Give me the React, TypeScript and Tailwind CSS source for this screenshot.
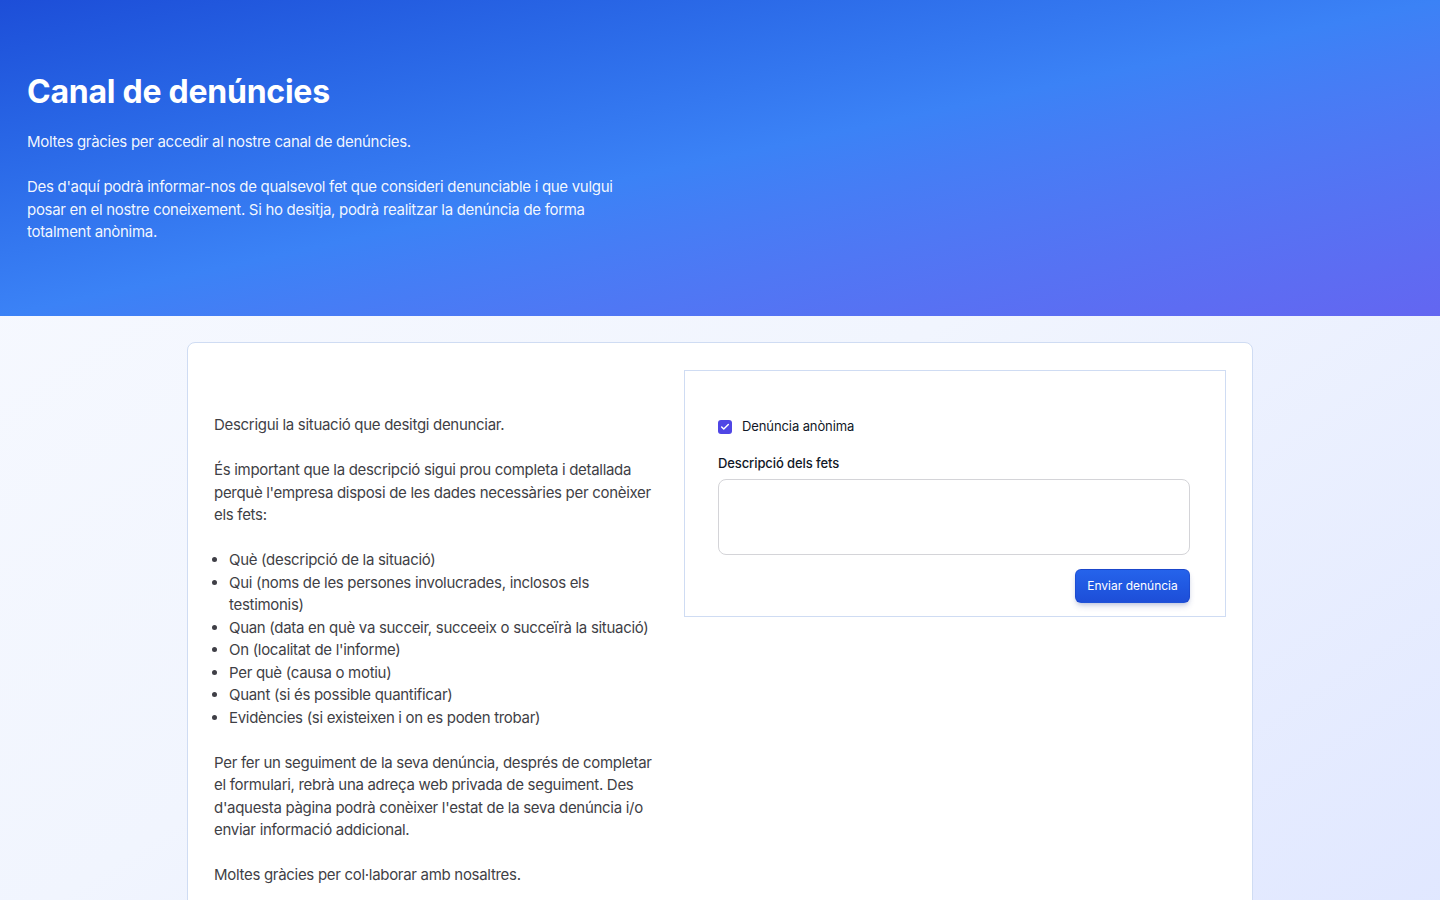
import { Check } from "lucide-react";

const items = [
  "Què (descripció de la situació)",
  "Qui (noms de les persones involucrades, inclosos els testimonis)",
  "Quan (data en què va succeir, succeeix o succeïrà la situació)",
  "On (localitat de l'informe)",
  "Per què (causa o motiu)",
  "Quant (si és possible quantificar)",
  "Evidències (si existeixen i on es poden trobar)",
];

const App = () => {
  return (
    <div className="min-h-screen font-['Inter','Noto_Sans',sans-serif] bg-gradient-to-br from-[#f8faff] via-[#f1f5fe] to-[#e0e7ff]">
      <header className="h-[316px] bg-gradient-to-br from-[#1d4ed8] via-[#3b82f6] to-[#6366f1] px-[27px] pt-[72px] text-white">
        <h1 className="text-[32px] font-bold leading-[40px] tracking-[-0.25px]">Canal de denúncies</h1>
        <div className="mt-[19px] max-w-[605px] text-[15px] leading-[22.5px] tracking-[-0.3px] text-white/95">
          <p>Moltes gràcies per accedir al nostre canal de denúncies.</p>
          <p className="mt-[22.5px]">
            Des d'aquí podrà informar-nos de qualsevol fet que consideri denunciable i que vulgui posar en el
            nostre coneixement. Si ho desitja, podrà realitzar la denúncia de forma totalment anònima.
          </p>
        </div>
      </header>

      <main className="flex justify-center pt-[26px]">
        <section className="w-[1066px] rounded-lg border border-[#cfdcf3] bg-white px-[26px] py-[27px] pb-12">
          <div className="grid grid-cols-[444px_1fr] gap-[27px]">
            <div className="pt-[44px] text-[15px] leading-[22.5px] tracking-[-0.3px] text-[#3f3f46]">
              <p>Descrigui la situació que desitgi denunciar.</p>
              <p className="mt-[22.5px]">
                És important que la descripció sigui prou completa i detallada perquè l'empresa disposi de les
                dades necessàries per conèixer els fets:
              </p>
              <ul className="mt-[22.5px] list-disc pl-[15px]">
                {items.map((item) => (
                  <li key={item}>{item}</li>
                ))}
              </ul>
              <p className="mt-[22.5px]">
                Per fer un seguiment de la seva denúncia, després de completar el formulari, rebrà una adreça web
                privada de seguiment. Des d'aquesta pàgina podrà conèixer l'estat de la seva denúncia i/o enviar
                informació addicional.
              </p>
              <p className="mt-[22.5px]">Moltes gràcies per col·laborar amb nosaltres.</p>
            </div>

            <div className="-ml-px self-start border border-[#cfdcf3] bg-white pl-[33px] pr-[35px] pt-[46px] pb-[13px]">
              <label className="flex items-center gap-[10px] text-[13px] tracking-[-0.1px] text-[#111827]">
                <span className="flex h-[14px] w-[14px] items-center justify-center rounded-[3px] bg-[#4f46e5]">
                  <Check className="h-[10px] w-[10px] text-white" strokeWidth={3.5} />
                </span>
                Denúncia anònima
              </label>
              <div className="mt-[17px] text-[13px] font-medium tracking-[-0.1px] text-[#111827]">Descripció dels fets</div>
              <textarea className="mt-[6px] block h-[76px] w-full resize-none rounded-lg border border-[#d4d4d8] bg-white outline-none" />
              <div className="mt-[14px] flex justify-end">
                <button className="h-[34px] w-[115px] rounded-md border border-blue-800/40 bg-gradient-to-b from-[#2563eb] to-[#1d4ed8] text-[12px] text-white shadow-md shadow-blue-900/20">
                  Enviar denúncia
                </button>
              </div>
            </div>
          </div>
        </section>
      </main>
    </div>
  );
};

export default App;
